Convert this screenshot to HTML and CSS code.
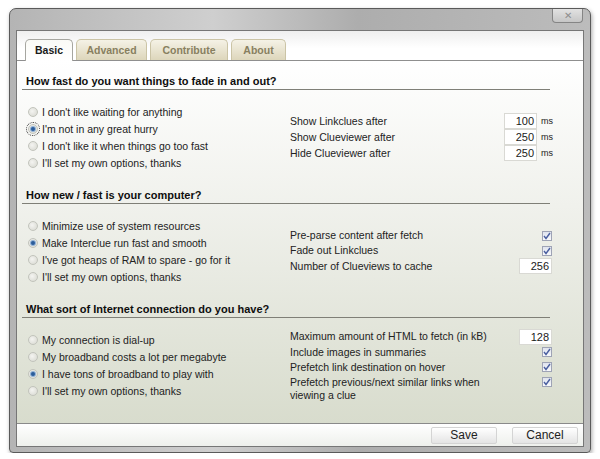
FILE: index.html
```html
<!DOCTYPE html>
<html lang="en">
<head>
    <meta charset="UTF-8">
    <title>Interclue Options</title>
    <link rel="stylesheet" href="styles.css">
</head>
<body>
    <div class="window">
        <div class="titlebar">
            <span class="close">&#10005;</span>
        </div>
        <div class="client">
            <div class="tabs">
                <span class="tab active">Basic</span>
                <span class="tab tab-advanced">Advanced</span>
                <span class="tab tab-contribute">Contribute</span>
                <span class="tab tab-about">About</span>
            </div>

            <div class="panel">
                <section class="group">
                    <h2>How fast do you want things to fade in and out?</h2>
                    <div class="group-body">
                        <ul class="choices">
                            <li><span class="radio"></span>I don't like waiting for anything</li>
                            <li><span class="radio checked focused"></span>I'm not in any great hurry</li>
                            <li><span class="radio"></span>I don't like it when things go too fast</li>
                            <li><span class="radio"></span>I'll set my own options, thanks</li>
                        </ul>
                        <div class="settings timing">
                            <div class="setting"><span class="label">Show Linkclues after</span><span class="num">100</span><span class="unit">ms</span></div>
                            <div class="setting"><span class="label">Show Clueviewer after</span><span class="num">250</span><span class="unit">ms</span></div>
                            <div class="setting"><span class="label">Hide Clueviewer after</span><span class="num">250</span><span class="unit">ms</span></div>
                        </div>
                    </div>
                </section>

                <section class="group">
                    <h2>How new / fast is your computer?</h2>
                    <div class="group-body">
                        <ul class="choices">
                            <li><span class="radio"></span>Minimize use of system resources</li>
                            <li><span class="radio checked"></span>Make Interclue run fast and smooth</li>
                            <li><span class="radio"></span>I've got heaps of RAM to spare - go for it</li>
                            <li><span class="radio"></span>I'll set my own options, thanks</li>
                        </ul>
                        <div class="settings">
                            <div class="setting"><span class="label">Pre-parse content after fetch</span><span class="check"><svg width="8" height="8" viewBox="0 0 8 8"><path d="M1 4 L3 6.5 L7 1" fill="none" stroke="#4a5fa0" stroke-width="1.4"/></svg></span></div>
                            <div class="setting"><span class="label">Fade out Linkclues</span><span class="check"><svg width="8" height="8" viewBox="0 0 8 8"><path d="M1 4 L3 6.5 L7 1" fill="none" stroke="#4a5fa0" stroke-width="1.4"/></svg></span></div>
                            <div class="setting"><span class="label">Number of Clueviews to cache</span><span class="num">256</span></div>
                        </div>
                    </div>
                </section>

                <section class="group">
                    <h2>What sort of Internet connection do you have?</h2>
                    <div class="group-body">
                        <ul class="choices">
                            <li><span class="radio"></span>My connection is dial-up</li>
                            <li><span class="radio"></span>My broadband costs a lot per megabyte</li>
                            <li><span class="radio checked"></span>I have tons of broadband to play with</li>
                            <li><span class="radio"></span>I'll set my own options, thanks</li>
                        </ul>
                        <div class="settings">
                            <div class="setting"><span class="label">Maximum amount of HTML to fetch (in kB)</span><span class="num">128</span></div>
                            <div class="setting"><span class="label">Include images in summaries</span><span class="check"><svg width="8" height="8" viewBox="0 0 8 8"><path d="M1 4 L3 6.5 L7 1" fill="none" stroke="#4a5fa0" stroke-width="1.4"/></svg></span></div>
                            <div class="setting"><span class="label">Prefetch link destination on hover</span><span class="check"><svg width="8" height="8" viewBox="0 0 8 8"><path d="M1 4 L3 6.5 L7 1" fill="none" stroke="#4a5fa0" stroke-width="1.4"/></svg></span></div>
                            <div class="setting wrap"><span class="label">Prefetch previous/next similar links when viewing a clue</span><span class="check"><svg width="8" height="8" viewBox="0 0 8 8"><path d="M1 4 L3 6.5 L7 1" fill="none" stroke="#4a5fa0" stroke-width="1.4"/></svg></span></div>
                        </div>
                    </div>
                </section>
            </div>

            <div class="footer">
                <button class="btn">Save</button>
                <button class="btn">Cancel</button>
            </div>
        </div>
    </div>
</body>
</html>
```

FILE: styles.css
```css
* {
    box-sizing: border-box;
}
body {
    margin: 0;
    background: #ffffff;
    font-family: "Liberation Sans", Arial, sans-serif;
    color: #1e1e1e;
}
.window {
    margin: 8px 0 0 9px;
    width: 582px;
    height: 445px;
    border: 1px solid #5a5a5a;
    border-radius: 7px 7px 4px 4px;
    background: linear-gradient(to right, #b4b4b4, #cfcfcf 35%, #adadad 60%, #bcbcbc);
    padding: 0 6px 5px 6px;
    box-shadow: 1px 2px 4px rgba(0,0,0,0.35);
}
.titlebar {
    height: 21px;
    display: flex;
    justify-content: flex-end;
    align-items: flex-start;
}
.close {
    width: 31px;
    height: 14px;
    margin-right: 1px;
    border: 1px solid #858585;
    border-top: none;
    border-radius: 0 0 4px 4px;
    background: linear-gradient(#e2e2e2, #c6c6c6);
    color: #8e8e8e;
    font-size: 10px;
    line-height: 13px;
    text-align: center;
}
.client {
    height: 417px;
    border: 1px solid #767676;
    background: #ffffff;
    display: flex;
    flex-direction: column;
}
.tabs {
    height: 30px;
    padding-left: 8px;
    display: flex;
    align-items: flex-end;
    gap: 3px;
    border-bottom: 1px solid #8f8f8f;
    background: linear-gradient(#efefef, #ffffff 60%);
}
.tab {
    height: 21px;
    padding: 4px 0 0;
    text-align: center;
    font-size: 10.5px;
    font-weight: bold;
    color: #887f60;
    border: 1px solid #cbc4a6;
    border-bottom: none;
    border-radius: 5px 5px 0 0;
    background: linear-gradient(#f5f2e6, #ddd6bb);
}
.tab.active {
    width: 48px;
    height: 22px;
    margin-bottom: -1px;
    color: #1a1a1a;
    border-color: #a6a6a0;
    background: linear-gradient(#fafaf6, #ffffff);
}
.tab-advanced {
    width: 71px;
}
.tab-contribute {
    width: 78px;
}
.tab-about {
    width: 55px;
}
.panel {
    flex: 1;
    padding: 13px 0 0 5px;
    background: linear-gradient(#ffffff, #f0f1ec 40%, #d8dccd);
}
.group h2 {
    margin: 0 33px 0 0;
    padding: 0 0 1px 4px;
    font-size: 11px;
    line-height: 14px;
    color: #0e0e0e;
    border-bottom: 1px solid #7f7f77;
}
.group-body {
    height: 98px;
    padding: 13px 0 17px;
    display: flex;
    align-items: center;
}
.choices {
    list-style: none;
    margin: 0;
    padding: 0 0 0 6px;
    width: 268px;
    font-size: 10.5px;
    color: #222;
}
.choices li {
    height: 17px;
    display: flex;
    align-items: center;
}
.radio {
    width: 10px;
    height: 10px;
    margin-right: 4px;
    border-radius: 50%;
    border: 1px solid #c2c4bc;
    background: radial-gradient(circle at 40% 40%, #f4f4f1, #d6d7cf);
    display: flex;
    align-items: center;
    justify-content: center;
}
.radio.checked::after {
    content: "";
    width: 4px;
    height: 4px;
    border-radius: 50%;
    background: #2b5d9a;
    box-shadow: 0 0 0 1px #8fb0d6;
}
.radio.focused {
    outline: 1px dotted #333;
    outline-offset: 1px;
}
.settings {
    width: 265px;
    font-size: 10.5px;
    color: #222;
}
.setting {
    min-height: 15px;
    display: flex;
    align-items: center;
    padding-right: 3px;
}
.timing .setting {
    height: 16px;
    padding-right: 0;
}
.label {
    width: 215px;
    line-height: 13px;
}
.setting.wrap {
    align-items: flex-start;
}
.setting.wrap .label {
    padding-top: 1px;
}
.setting.wrap .check {
    margin-top: 2px;
}
.num {
    margin-left: auto;
    width: 33px;
    height: 16px;
    padding-right: 2px;
    border: 1px solid #d9d9d4;
    background: #ffffff;
    text-align: right;
    font-size: 11px;
    line-height: 14px;
    color: #1a1a1a;
}
.unit {
    width: 14px;
    margin-left: 4px;
    font-size: 9px;
}
.check {
    margin-left: auto;
    width: 10px;
    height: 10px;
    border: 1px solid #9ea3b5;
    background: linear-gradient(#dfe3ee, #f8f9fb);
    display: flex;
    align-items: center;
    justify-content: center;
}
.footer {
    height: 23px;
    border-top: 1px solid #8a8a8a;
    background: linear-gradient(#ffffff, #eef0ec);
    display: flex;
    justify-content: flex-end;
    align-items: center;
    gap: 15px;
    padding-right: 5px;
}
.btn {
    width: 66px;
    height: 17px;
    padding: 0;
    border: 1px solid #d4d4d4;
    border-radius: 2px;
    background: linear-gradient(#ffffff, #e4e4e4);
    font-family: "Liberation Sans", Arial, sans-serif;
    font-size: 12px;
    color: #222;
}
```
